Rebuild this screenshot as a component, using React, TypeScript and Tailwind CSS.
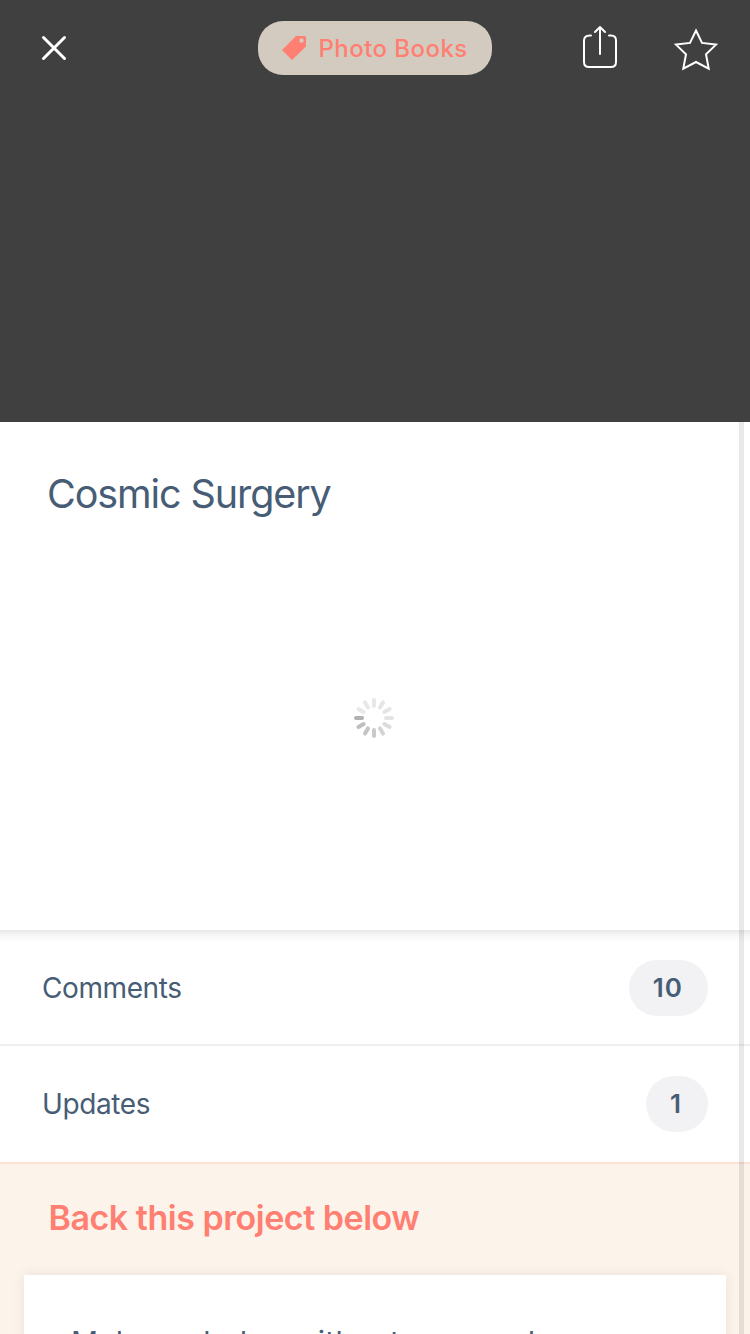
import type { ReactNode } from "react";

const SPOKES = [
  "#e7e7e7", "#e5e5e5", "#e5e5e5", "#e4e4e4", "#dcdcdc", "#d4d4d4",
  "#cacaca", "#c4c4c4", "#bebebe", "#b2b2b2", "#e9e9e9", "#e8e8e8",
];

function Spinner() {
  return (
    <svg className="size-10" viewBox="-20 -20 40 40" aria-label="Loading">
      {SPOKES.map((color, i) => (
        <rect key={i} x="-2" y="-20" width="4" height="10" rx="2" fill={color} transform={`rotate(${i * 30})`} />
      ))}
    </svg>
  );
}

function Row({ label, children }: { label: ReactNode; children: ReactNode }) {
  return (
    <div className="flex items-center justify-between pl-[42px] pr-[42px]">
      <span className="text-[28px] leading-[34px] tracking-[-0.4px]">{label}</span>
      <span className="flex h-14 min-w-[62px] items-center rounded-[28px] bg-[#f2f2f5] pl-6 pr-[25px] text-[26px] font-semibold leading-[32px] tracking-[1px]">{children}</span>
    </div>
  );
}

export default function App() {
  return (
    <div className="relative flex h-[1334px] w-[750px] flex-col overflow-hidden bg-white font-[Inter,'Liberation_Sans',sans-serif] text-[#475d75]">
      <header className="grid h-[422px] shrink-0 grid-cols-[258px_234px_258px] items-start bg-[#404040]">
        <button className="ml-[40px] mt-[34px] size-7" aria-label="Close">
          <svg className="size-7" viewBox="0 0 28 28" fill="none" stroke="#fff" strokeWidth="3" strokeLinecap="round">
            <path d="M3.5 3.5l21 21M24.500 3.500l-21 21" />
          </svg>
        </button>
        <div className="mt-[21px] flex h-[54px] items-center rounded-[25px] bg-[#d3cbbf] pl-6 text-[#ff7f72]">
          <svg className="size-6" viewBox="0 0 24 24" fill="currentColor">
            <path fillRule="evenodd" d="M14 0H22.500Q24 0 24 1.500V10.500L10 24L0 14ZM19.500 2.300a2.200 2.200 0 1 0 0 4.400a2.200 2.200 0 0 0 0-4.400Z" />
          </svg>
          <span className="ml-[12.5px] whitespace-nowrap pt-0.5 text-[24px] font-medium leading-[30px] tracking-[0.45px]">Photo Books</span>
        </div>
        <div className="flex items-start">
          <svg className="ml-[90px] mt-6 h-[46px] w-9" viewBox="0 0 36 46" fill="none" stroke="#fff" strokeWidth="2" strokeLinecap="round" strokeLinejoin="round">
            <path d="M9 11.500H8Q2 11.500 2 16.500V38Q2 43 7 43H29Q34 43 34 38V16.500Q34 11.500 29 11.500H27M18 30V3M13 8L18 3L23 8" />
          </svg>
          <svg className="ml-[56px] mt-[27px] h-[46px] w-[44px]" viewBox="0 0 44 46" fill="none" stroke="#fff" strokeWidth="2">
            <path d="M22 3.500L28 15.900L42 17.600L32 27.300L34.700 41.600L22 35L9.300 41.600L12 27.300L2 17.600L16 15.900Z" />
          </svg>
        </div>
      </header>

      <section className="flex h-[508px] shrink-0 flex-col bg-white">
        <h1 className="ml-[47px] mt-[48px] text-[39.5px] leading-[49px] tracking-[-1.1px]"><span>Cosmic Surgery</span></h1>
        <div className="mt-[179px] pl-[354px]">
          <Spinner />
        </div>
      </section>

      <section className="shrink-0 bg-[linear-gradient(to_bottom,#e8e8e8,#f6f6f6_5px,#fff_12px)]">
        <div className="flex h-[116px] flex-col justify-center border-b-2 border-[#f0f0f1] pt-0.5">
          <Row label="Comments">10</Row>
        </div>
        <div className="flex h-[116px] flex-col justify-center">
          <Row label="Updates">1</Row>
        </div>
      </section>

      <section className="flex h-[172px] shrink-0 flex-col border-t-2 border-[#fee0d6] bg-[#fcf4ea]">
        <h2 className="ml-[48.5px] mt-[33px] text-[34px] font-semibold leading-[42px] tracking-[-0.47px] text-[#ff7f72]"><span>Back this project below</span></h2>
        <div className="mx-6 mt-[36px] h-[120px] shrink-0 bg-white pl-[47px] pt-[47px] shadow-[0_0_12px_rgba(0,0,0,0.08)]">
          <p className="whitespace-nowrap text-[30px] leading-[40px] tracking-[0.36px]">Make a pledge without a reward</p>
        </div>
      </section>

      <div className="absolute left-[739px] top-[422px] z-20 h-[912px] w-[5px] bg-black/[0.09]" />
    </div>
  );
}
